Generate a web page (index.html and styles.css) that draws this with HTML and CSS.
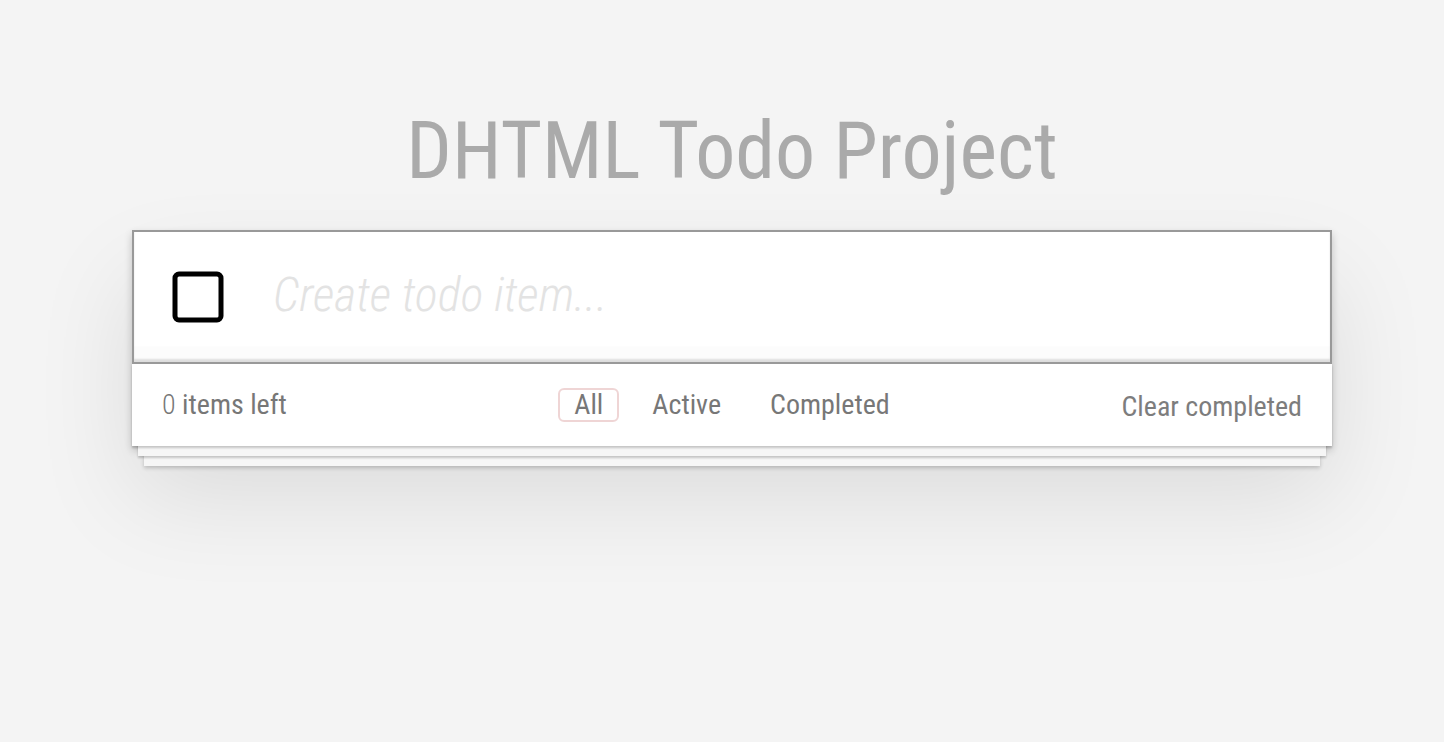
FILE: index.html
```html
<!DOCTYPE html>
<html lang="en">
<head>
<meta charset="utf-8">
<title>DHTML Todo Project</title>
<link rel="stylesheet" href="styles.css">
</head>
<body>
  <div class="app">
    <h1 class="title">DHTML Todo Project</h1>
    <section class="card">
      <div class="new-row">
        <svg class="toggle" width="52" height="52" viewBox="0 0 52 52" aria-hidden="true">
          <rect x="3" y="3" width="46" height="46" rx="4" ry="4" fill="none" stroke="#000" stroke-width="5"/>
        </svg>
        <input class="new-todo" type="text" placeholder="Create todo item...">
      </div>
      <footer class="footer">
        <span class="count"><span class="num">0</span> items left</span>
        <ul class="filters">
          <li><a class="filter selected">All</a></li>
          <li><a class="filter">Active</a></li>
          <li><a class="filter">Completed</a></li>
        </ul>
        <span class="clear">Clear completed</span>
      </footer>
    </section>
  </div>
</body>
</html>
```

FILE: styles.css
```css
html, body {
  margin: 0;
  padding: 0;
}

html {
  background: #f4f4f4;
}

body {
  min-height: 742px;
  box-sizing: border-box;
  font-family: "Roboto Condensed", Roboto, "Liberation Sans", sans-serif;
  color: #777;
  padding: 0 0 0 20px;
}

.app {
  width: 1200px;
  margin: 0 auto;
  padding-top: 111px;
  padding-bottom: 200px;
}

.title {
  margin: 0 0 39px;
  font-size: 80px;
  line-height: 80px;
  font-weight: 400;
  color: #aaa;
  text-align: center;
}

.card {
  position: relative;
  background: #fff;
  box-shadow: 0 4px 8px rgba(0, 0, 0, 0.2), 0 50px 100px 0 rgba(0, 0, 0, 0.1);
}

.new-row {
  display: flex;
  align-items: center;
  height: 134px;
  box-sizing: border-box;
  border: 2px solid #999;
  padding-left: 38px;
  background: #fff;
  box-shadow: inset 0 -3px 2px rgba(0, 0, 0, 0.12), inset 0 -16px 1px rgba(0, 0, 0, 0.012);
}

.toggle {
  flex: none;
  display: block;
}

.new-todo {
  flex: 1;
  min-width: 0;
  margin-left: 49px;
  margin-top: -5px;
  border: none;
  outline: none;
  background: transparent;
  font-family: inherit;
  font-size: 48px;
  font-weight: 300;
  font-style: italic;
  color: #4d4d4d;
  padding: 0;
}

.new-todo::placeholder {
  color: #e3e3e3;
  font-style: italic;
  font-weight: 300;
}

.footer {
  position: relative;
  display: grid;
  grid-template-columns: 1fr auto 1fr;
  align-items: center;
  height: 82px;
  box-sizing: border-box;
  padding: 0 30px;
  background: #fff;
  font-size: 28px;
  line-height: 40px;
  color: #777;
  box-shadow: 0 2px 2px rgba(0, 0, 0, 0.2),
              0 16px 0 -6px #f6f6f6,
              0 18px 2px -6px rgba(0, 0, 0, 0.2),
              0 32px 0 -12px #f6f6f6,
              0 34px 4px -12px rgba(0, 0, 0, 0.2);
}

.count {
  justify-self: start;
  font-weight: 400;
}

.num {
  font-weight: 300;
}

.filters {
  display: flex;
  gap: 17px;
  margin: 0;
  padding: 0;
  list-style: none;
}

.filter {
  display: block;
  padding: 0 14px;
  border: 2px solid transparent;
  border-radius: 6px;
  line-height: 30px;
  color: #777;
  font-weight: 400;
}

.filter.selected {
  border-color: rgba(175, 47, 47, 0.2);
}

.clear {
  justify-self: end;
  font-weight: 400;
  color: #7d7d7d;
  position: relative;
  top: 2px;
}
```
